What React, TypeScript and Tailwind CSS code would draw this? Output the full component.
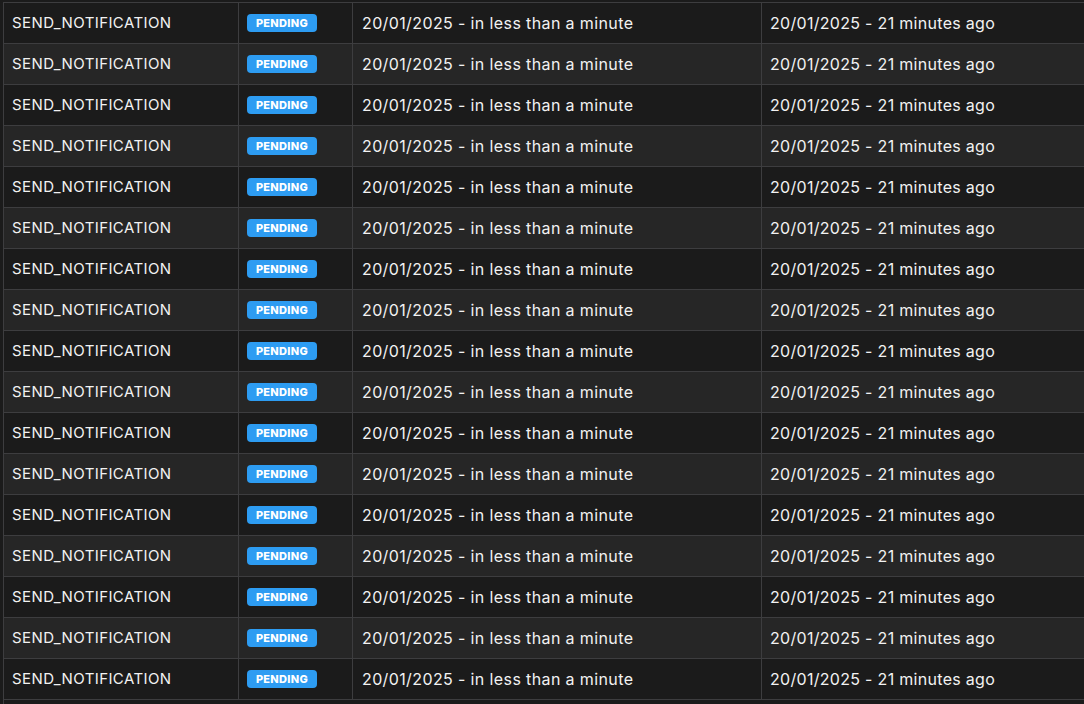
import React from 'react';

const rows = Array.from({ length: 17 }, (_, i) => ({
  id: i + 1,
  type: 'SEND_NOTIFICATION',
  status: 'PENDING',
  runAt: '20/01/2025 - in less than a minute',
  createdAt: '20/01/2025 - 21 minutes ago',
}));

const App = () => {
  return (
    <div
      className="min-h-screen w-[1084px] h-[704px] overflow-hidden bg-[#1b1b1b] pt-[2px] pl-[3px] text-white"
      style={{ fontFamily: 'Inter, "Liberation Sans", sans-serif' }}
    >
      <div className="border-l border-[#3d3d3f]">
        {rows.map((row, i) => (
          <div
            key={row.id}
            className={`grid grid-cols-[235px_114px_409px_1fr] h-[41px] border-t border-[#3d3d3f] ${
              i % 2 === 0 ? 'bg-[#1b1b1b]' : 'bg-[#262626]'
            }`}
          >
            <div className="flex items-center pl-[8px] border-r border-[#3d3d3f] text-[15px] tracking-[0.4px] text-[#f2f2f2]">
              {row.type}
            </div>
            <div className="flex items-center pl-[8px] border-r border-[#3d3d3f]">
              <span className="flex items-center justify-center w-[70px] h-[18px] rounded-[4px] bg-[#2d9cf2] text-[11px] font-extrabold text-white tracking-[0.3px]">
                {row.status}
              </span>
            </div>
            <div className="flex items-center pl-[9px] border-r border-[#3d3d3f] text-[16px] tracking-[0.38px] text-[#f2f2f2]">
              {row.runAt}
            </div>
            <div className="flex items-center pl-[8px] text-[16px] tracking-[0.3px] text-[#f2f2f2]">
              {row.createdAt}
            </div>
          </div>
        ))}
        <div className="border-t border-[#3d3d3f] h-[10px]" />
      </div>
    </div>
  );
};

export default App;
